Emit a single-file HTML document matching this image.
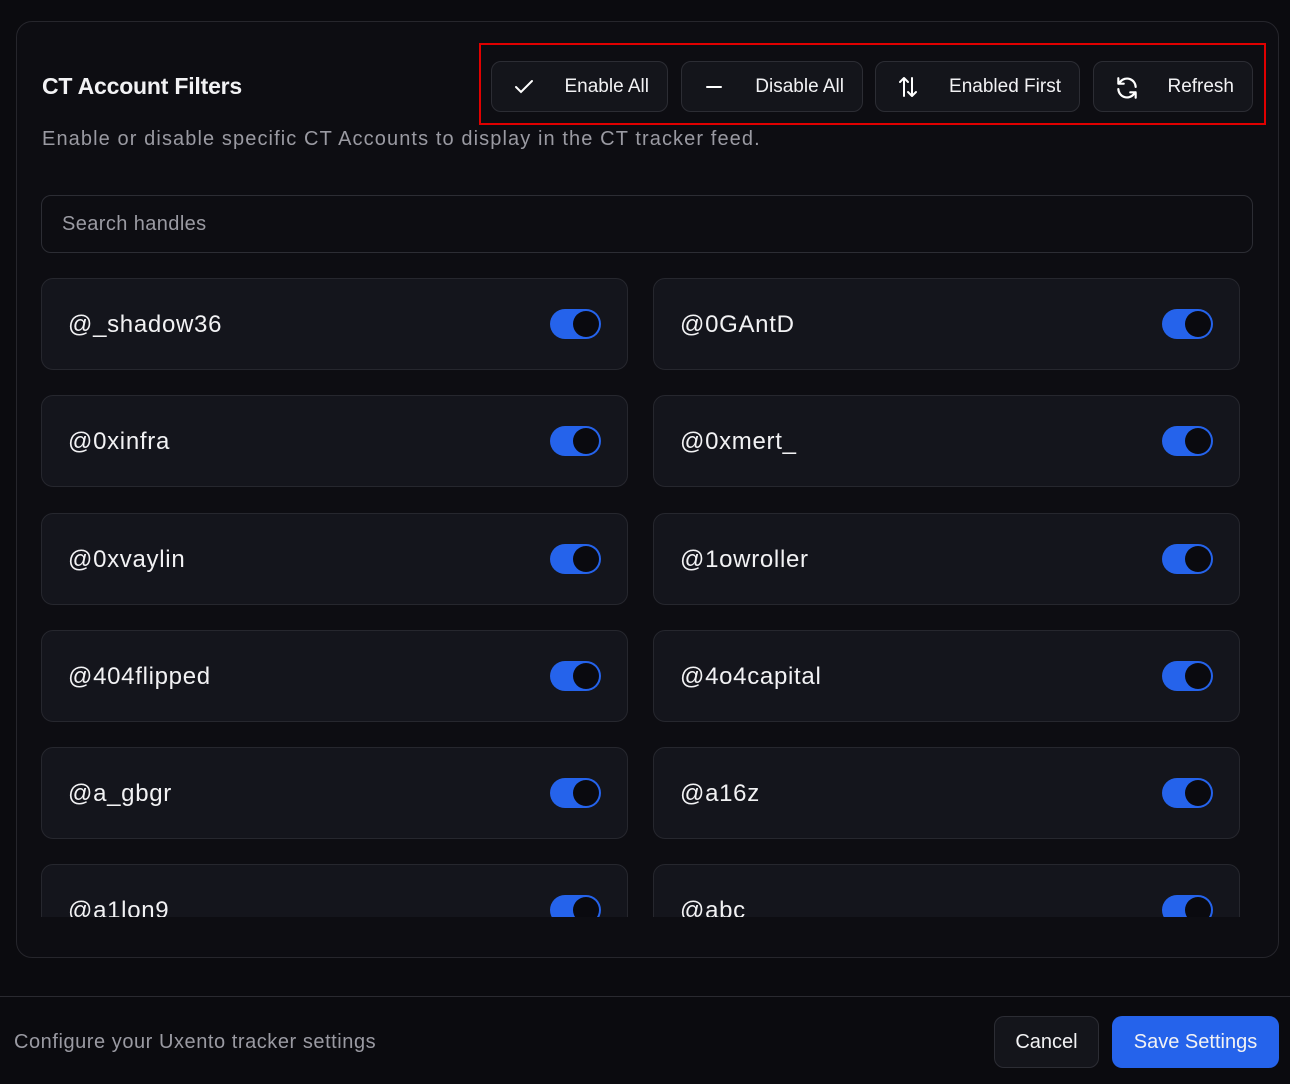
<!DOCTYPE html>
<html><head><style>
*{box-sizing:border-box;margin:0;padding:0}
body{width:1290px;height:1084px;background:#0b0b0f;font-family:"Liberation Sans",sans-serif;color:#f2f2f4;position:relative;overflow:hidden}
.panel{position:absolute;left:16px;top:21px;width:1263px;height:937px;border:1px solid #26262c;border-radius:16px;background:#0d0d12}
.title{position:absolute;left:42px;top:73px;font-size:23px;font-weight:bold;letter-spacing:-0.2px}
.sub{position:absolute;left:42px;top:128px;font-size:20px;color:#9a9aa2;letter-spacing:1.1px}
.red{position:absolute;left:479px;top:43px;width:787px;height:82px;border:2px solid #e00000}
.btn{position:absolute;top:61px;height:51px;border:1px solid #2c2d34;border-radius:10px;background:#14151b;font-size:19px;display:flex;align-items:center}
.btn svg{position:absolute;left:20px;top:13px}
.btn span{position:absolute;right:18px;top:14px}
.search{position:absolute;left:41px;top:195px;width:1212px;height:58px;border:1px solid #2c2d34;border-radius:10px;font-size:20px;color:#9a9aa2;padding:17px 20px;letter-spacing:0.4px}
.clip{position:absolute;left:0;top:0;width:1290px;height:917px;overflow:hidden}
.card{position:absolute;width:587px;height:92px;border:1px solid #26272e;border-radius:12px;background:#14151c}
.card .h{position:absolute;left:26px;top:32px;font-size:24px;letter-spacing:0.7px}
.tg{position:absolute;left:508px;top:30px;width:51px;height:30px;border-radius:15px;background:#2563eb}
.tg:after{content:"";position:absolute;right:2px;top:2px;width:26px;height:26px;border-radius:50%;background:#0a0a0f}
.line{position:absolute;left:0;top:996px;width:1290px;height:1px;background:#2a2a30}
.foot{position:absolute;left:14px;top:1031px;font-size:20px;color:#9a9aa2;letter-spacing:0.55px}
.cancel{position:absolute;left:994px;top:1016px;width:105px;height:52px;border:1px solid #2c2d34;border-radius:10px;background:#14151b;font-size:20px;text-align:center;line-height:50px}
.save{position:absolute;left:1112px;top:1016px;width:167px;height:52px;border-radius:10px;background:#2563eb;font-size:20px;text-align:center;line-height:52px}
</style></head><body>
<div class="panel"></div>
<div class="title">CT Account Filters</div>
<div class="sub">Enable or disable specific CT Accounts to display in the CT tracker feed.</div>
<div class="btn" style="left:491px;width:177px"><svg width="24" height="24" viewBox="0 0 24 24" fill="none" stroke="#fff" stroke-width="2" stroke-linecap="round"><path d="M4 12l5 5L20 6"/></svg><span>Enable All</span></div>
<div class="btn" style="left:681px;width:182px"><svg width="24" height="24" viewBox="0 0 24 24" fill="none" stroke="#fff" stroke-width="2" stroke-linecap="round"><path d="M5 12h14"/></svg><span>Disable All</span></div>
<div class="btn" style="left:875px;width:205px"><svg width="24" height="24" viewBox="0 0 24 24" fill="none" stroke="#fff" stroke-width="2" stroke-linecap="round" stroke-linejoin="round"><path d="M8 21V3M4 7l4-4 4 4M16 3v18M12 17l4 4 4-4"/></svg><span>Enabled First</span></div>
<div class="btn" style="left:1093px;width:160px"><svg width="26" height="26" viewBox="0 0 24 24" fill="none" stroke="#fff" stroke-width="2" stroke-linecap="round" stroke-linejoin="round"><path d="M20 11A8 8 0 0 0 6 6L4 8M4 3v5h5M4 13a8 8 0 0 0 14 5l2-2M20 21v-5h-5"/></svg><span>Refresh</span></div>
<div class="red"></div>
<div class="search">Search handles</div>
<div class="clip">
<div class="card" style="left:41px;top:278px"><div class="h">@_shadow36</div><div class="tg"></div></div>
<div class="card" style="left:653px;top:278px"><div class="h">@0GAntD</div><div class="tg"></div></div>
<div class="card" style="left:41px;top:395px"><div class="h">@0xinfra</div><div class="tg"></div></div>
<div class="card" style="left:653px;top:395px"><div class="h">@0xmert_</div><div class="tg"></div></div>
<div class="card" style="left:41px;top:513px"><div class="h">@0xvaylin</div><div class="tg"></div></div>
<div class="card" style="left:653px;top:513px"><div class="h">@1owroller</div><div class="tg"></div></div>
<div class="card" style="left:41px;top:630px"><div class="h">@404flipped</div><div class="tg"></div></div>
<div class="card" style="left:653px;top:630px"><div class="h">@4o4capital</div><div class="tg"></div></div>
<div class="card" style="left:41px;top:747px"><div class="h">@a_gbgr</div><div class="tg"></div></div>
<div class="card" style="left:653px;top:747px"><div class="h">@a16z</div><div class="tg"></div></div>
<div class="card" style="left:41px;top:864px"><div class="h">@a1lon9</div><div class="tg"></div></div>
<div class="card" style="left:653px;top:864px"><div class="h">@abc</div><div class="tg"></div></div>
</div>
<div class="line"></div>
<div class="foot">Configure your Uxento tracker settings</div>
<div class="cancel">Cancel</div>
<div class="save">Save Settings</div>
</body></html>
